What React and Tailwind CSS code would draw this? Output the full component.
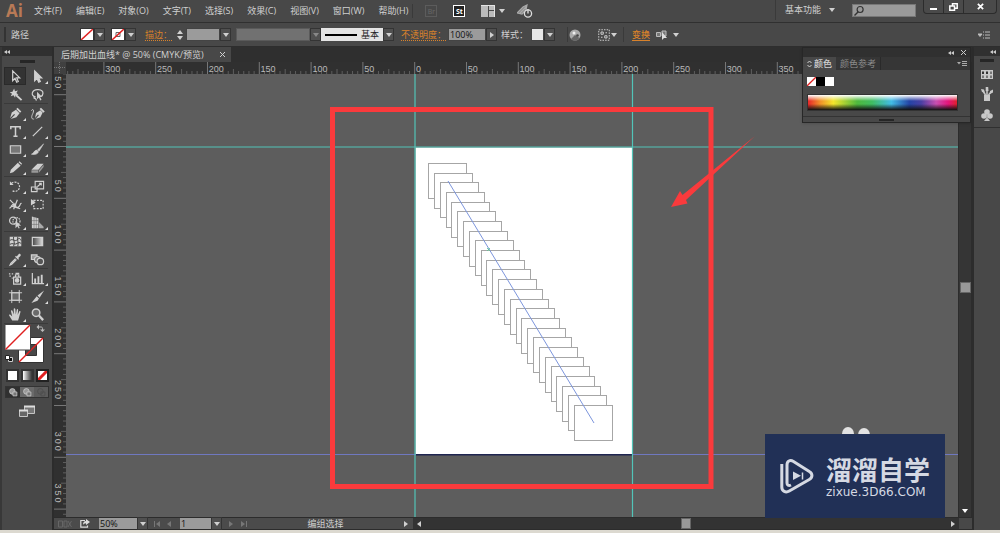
import React from "react";

const menus = [
  "文件(F)",
  "编辑(E)",
  "对象(O)",
  "文字(T)",
  "选择(S)",
  "效果(C)",
  "视图(V)",
  "窗口(W)",
  "帮助(H)",
];

const Icon = ({ children, className = "w-4 h-4" }) => (
  <svg
    viewBox="0 0 16 16"
    className={className}
    fill="none"
    stroke="currentColor"
    strokeWidth="1.3"
    aria-hidden="true"
  >
    {children}
  </svg>
);

const Caret = ({ className = "" }) => (
  <svg viewBox="0 0 6 4" className={`w-[6px] h-1 ${className}`} aria-hidden="true">
    <path d="M0 0h6L3 4z" fill="currentColor" />
  </svg>
);

const DropButton = ({ label, className = "" }) => (
  <button
    aria-label={label}
    className={`w-[11px] h-[13px] flex items-center justify-center border border-[#343434] bg-[#505050] ${className}`}
  >
    <Caret />
  </button>
);

// Tools, grouped the way the toolbar separates them
const toolGroups = [
  [
    { name: "选择工具", active: true, icon: <path d="M5 2v10.500l2.500-2.500 1.800 4 1.700-.8-1.700-3.700H12.500z" /> },
    { name: "直接选择工具", more: true, icon: <path d="M5 2v10.500l2.500-2.500 1.800 4 1.700-.8-1.700-3.700H12.500z" fill="currentColor" /> },
    {
      name: "魔棒工具",
      icon: (
        <>
          <path d="M8.500 8.500l6 5.500" strokeWidth="2" />
          <path d="M6.500 1.500l1 3 3-.8-1.600 2.600 2.300 2-3 .2-.7 3-1.600-2.600-3 1 1.400-2.700-2.500-1.700 3-.4z" fill="currentColor" stroke="none" />
        </>
      ),
    },
    {
      name: "套索工具",
      icon: (
        <>
          <path d="M6 10.500C3 10 2 8 2.500 6.300 3.300 3.700 6 2.500 9 2.800c3 .3 5 2 4.800 4C13.600 8.500 13 9.500 12 10M5 10c-1 1-1 2 0 2.200s2 1 1.500 2.300" />
          <path d="M7.500 5v8l2-1.700 1.500 3 1.300-.6-1.500-3h2.200z" fill="currentColor" stroke="none" />
        </>
      ),
    },
  ],
  [
    {
      name: "钢笔工具",
      more: true,
      icon: (
        <>
          <path d="M2 14l2-7 4.500-3 3.800 3.800L9 12z" fill="currentColor" stroke="none" />
          <path d="M2 14l5-5" stroke="#484848" />
          <path d="M9.500 2.500l4 4" strokeWidth="2" />
        </>
      ),
    },
    {
      name: "曲率工具",
      icon: (
        <>
          <path d="M5 14l1.500-6.500L11 4.500 13.500 7 11 12z" fill="currentColor" stroke="none" />
          <path d="M5 14l4-4.500" stroke="#484848" />
          <path d="M11 2.500l4 4" strokeWidth="2" />
          <path d="M1.500 5c2-3 3 0 1.500 3s-2 6 1 6" strokeWidth="1" />
        </>
      ),
    },
    { name: "文字工具", more: true, icon: <path d="M3 5.500V3h10v2.500M8 3v10M5.800 13h4.400" strokeWidth="1.600" /> },
    { name: "直线段工具", more: true, icon: <path d="M3 13L13 3" /> },
    { name: "矩形工具", more: true, icon: <path d="M2.500 4h11v8h-11z" fill="#777" /> },
    {
      name: "画笔工具",
      more: true,
      icon: <path d="M14.500 2L8 8.200l1.600 1.600zM7.300 8.600L9 10.500c-.4 2-3 3.500-7.500 2.500 2.500-.5 2.500-4 5.800-4.400z" fill="currentColor" strokeWidth="0.600" />,
    },
    {
      name: "铅笔工具",
      more: true,
      icon: <path d="M2 14l1-3.500L10.500 3l3 3L5.500 13zM11.300 2.300l1-1 2.700 2.800-.8 1z" fill="currentColor" stroke="none" />,
    },
    {
      name: "橡皮擦工具",
      more: true,
      icon: (
        <>
          <path d="M1.500 10.500L8 4h6.500L9 10.500z" fill="currentColor" stroke="none" />
          <path d="M1.500 11h7.300v2.500H1.500zM9.500 11l5-6v2.500l-5 6z" fill="#999" stroke="none" />
        </>
      ),
    },
  ],
  [
    {
      name: "旋转工具",
      more: true,
      icon: (
        <>
          <path d="M4 4.500A5 5 0 1 1 4 12" strokeDasharray="2 1.200" />
          <path d="M2 2.500v4h4z" fill="currentColor" stroke="none" />
        </>
      ),
    },
    {
      name: "比例缩放工具",
      more: true,
      icon: <path d="M5.500 2.500h9v8h-9zM1.500 8.500h6v5h-6zM8 8l4-3.500M9.500 4.500H12V7" strokeWidth="1.200" />,
    },
    {
      name: "宽度工具",
      more: true,
      icon: (
        <>
          <path d="M2 3l4 4M1.500 12c3-1 2-5 5-4s1 4 4 3 2-5 4-4M10 3L6 13M3 9.500l10 3" />
          <circle cx="7" cy="8.500" r="1.800" fill="currentColor" stroke="none" />
        </>
      ),
    },
    {
      name: "自由变换工具",
      icon: (
        <>
          <path d="M4 3.500h10v9H4z" strokeDasharray="2 1.400" />
          <path d="M1 2v7l5-3.500z" fill="currentColor" stroke="none" />
        </>
      ),
    },
    {
      name: "形状生成器工具",
      more: true,
      icon: (
        <>
          <circle cx="5.500" cy="6" r="3.800" />
          <circle cx="9" cy="6.500" r="3.800" strokeDasharray="1.500 1" />
          <path d="M8 6v8l2-2 1.500 2.500 1-.6L11.200 11.500H14z" fill="currentColor" stroke="none" />
        </>
      ),
    },
    {
      name: "透视网格工具",
      more: true,
      icon: (
        <>
          <path d="M2 1.500l7 2V14H2z" fill="currentColor" stroke="none" />
          <path d="M9.500 7.500l5 5V14h-5z" fill="#aaa" stroke="none" />
          <path d="M4.300 2v12M6.700 2v12M2 6h7M2 10h7" stroke="#555" strokeWidth="0.500" />
        </>
      ),
    },
  ],
  [
    {
      name: "网格工具",
      icon: (
        <>
          <path d="M2.500 3.500h11v9h-11z" fill="currentColor" />
          <path d="M2 7c3-3 5 2 8-1s3 0 4 1M2 11c3-2 5 1 8-1s3 0 4 0M6 3c-1 3 2 5 0 10M10.500 3c-1 3 1 6 0 10" stroke="#3c3c3c" strokeWidth="1" />
        </>
      ),
    },
    {
      name: "渐变工具",
      icon: (
        <>
          <defs>
            <linearGradient id="toolGradient">
              <stop offset="0" stopColor="#444" />
              <stop offset="1" stopColor="#ddd" />
            </linearGradient>
          </defs>
          <path d="M2.500 3.500h11v9h-11z" fill="url(#toolGradient)" />
        </>
      ),
    },
    {
      name: "吸管工具",
      more: true,
      icon: (
        <>
          <path d="M8 7l-5 5-.800 1.800L4 13l5-5" />
          <path d="M7.500 5l1-1 .8.800 2-2.500c1.300-1.200 3 .4 2 2L11 6.500l.8.900-1 1z" fill="currentColor" stroke="none" />
        </>
      ),
    },
    {
      name: "混合工具",
      icon: (
        <>
          <path d="M1.500 3h6v5h-6z" fill="#999" />
          <circle cx="8" cy="8" r="3.200" fill="#777" />
          <circle cx="11" cy="10" r="3.500" fill="#555" />
        </>
      ),
    },
  ],
  [
    {
      name: "符号喷枪工具",
      more: true,
      icon: (
        <>
          <path d="M6 6.500h7.500v7.500H6zM8 6V4h3.500v2" />
          <circle cx="9.700" cy="10" r="1.800" fill="currentColor" />
          <path d="M8 2.500h4M1 3h1.500M4 3h1.500M1.500 5.500H3M4 7.500h1" />
        </>
      ),
    },
    {
      name: "柱形图工具",
      more: true,
      icon: (
        <>
          <path d="M2.500 2v11.500H15" />
          <path d="M4.500 8h2v5h-2zM8 5.500h2V13H8zM11.500 4h2v9h-2z" fill="currentColor" stroke="none" />
        </>
      ),
    },
    { name: "画板工具", icon: <path d="M4 1v14M12 1v14M1 4h14M1 12h14M4 4h8v8H4z" fill="#6a6a6a" strokeWidth="1" /> },
    {
      name: "切片工具",
      more: true,
      icon: <path d="M15 1.500L8 7l2.200 2.300zM7.200 7.600l2.400 2.500L8 12.500 1.500 15z" fill="currentColor" stroke="none" />,
    },
    {
      name: "抓手工具",
      more: true,
      icon: (
        <path
          d="M4.500 14.500L1.200 9c-.4-1 .7-1.500 1.400-.8L4.500 10 3.200 4.500c-.2-1.200 1.200-1.400 1.600-.4L6.300 8l-.2-5.800c0-1.200 1.500-1.200 1.700 0L8.300 8l1-5.200c.3-1.100 1.600-.8 1.500.3L10.300 8.500l1.600-3.700c.5-1 1.700-.5 1.400.6L11.500 12l-.8 2.500z"
          fill="currentColor"
          stroke="none"
        />
      ),
    },
    {
      name: "缩放工具",
      icon: (
        <>
          <circle cx="6.500" cy="6" r="4" fill="#6a6a6a" strokeWidth="1.600" />
          <path d="M9.500 9l4.500 5" strokeWidth="2.400" />
        </>
      ),
    },
  ],
];

const MenuBar = () => (
  <header className="h-[23px] flex items-center border-b border-[#303030]">
    <span className="w-[34px] pl-[6px] text-[17px] leading-5 font-bold text-[#b87a56]">Ai</span>
    <nav className="flex gap-[14px]">
      {menus.map((m) => (
        <button key={m} className="min-w-7 whitespace-nowrap">
          {m}
        </button>
      ))}
    </nav>
    <div className="ml-1 pl-3 flex items-center gap-4 border-l border-[#3a3a3a]">
      <button className="w-3 h-3 border border-[#5c5c5c] text-[7px] leading-[9px] text-[#686868]">Br</button>
      <button className="w-3 h-3 border border-white bg-[#222] text-[7px] leading-[9px] font-bold text-white">St</button>
      <button aria-label="排列文档" className="flex items-center gap-1">
        <svg viewBox="0 0 14 12" className="w-[14px] h-3" aria-hidden="true">
          <path d="M0 0h7v12H0zM8 0h6v5H8zM8 6h6v6H8z" fill="#bbb" />
          <path d="M0 .5h14M13.500 0v12" stroke="#e4e4e4" />
        </svg>
        <Caret />
      </button>
      <button aria-label="GPU 性能" className="-ml-1">
        <svg viewBox="0 0 16 14" className="w-4 h-[14px]" fill="none" aria-hidden="true">
          <path d="M0 9L6 3l4-2-1 5-4 4zM3 9l7-7" fill="#888" stroke="#aaa" strokeWidth="1.200" />
          <circle cx="11" cy="9.500" r="3.600" fill="#484848" stroke="#ddd" strokeWidth="1.300" />
          <path d="M11 5v4.500" stroke="#ddd" strokeWidth="1.400" />
        </svg>
      </button>
    </div>
    <div className="ml-auto h-full flex items-start">
      <button className="h-5 px-[9px] flex items-center gap-2 border-l border-[#3a3a3a]">
        基本功能
        <Caret className="w-1" />
      </button>
      <label className="mt-1 ml-[8px] w-16 h-[13px] flex items-center bg-[#9a9a9a] border border-[#777] text-[#333]">
        <Icon className="w-3 h-3 shrink-0">
          <circle cx="9.500" cy="6" r="4" strokeWidth="1.600" />
          <path d="M7 9l-5 5" strokeWidth="2" />
        </Icon>
        <input aria-label="搜索" className="w-full min-w-0 bg-transparent outline-none" />
      </label>
      <div className="ml-[7px] mr-[3px] h-[14px] flex bg-[#4a4a4a] border border-t-0 border-[#2c2c2c] rounded-b-sm divide-x divide-[#2c2c2c] text-white">
        <button aria-label="最小化" className="w-5 flex justify-center items-center pt-1">
          <span className="w-[7px] h-[2px] bg-white" />
        </button>
        <button aria-label="还原" className="w-5 flex justify-center items-center">
          <svg viewBox="0 0 9 8" className="w-[9px] h-2" fill="none" stroke="currentColor" strokeWidth="1.500" aria-hidden="true">
            <path d="M3.500 3V.8h4.700v4.400H6M.8 3h4.700v4.200H.8z" />
          </svg>
        </button>
        <button aria-label="关闭" className="w-8 flex justify-center items-center">
          <svg viewBox="0 0 8 8" className="w-[7px] h-[7px]" stroke="currentColor" strokeWidth="2" aria-hidden="true">
            <path d="M1 1l6 6M7 1L1 7" />
          </svg>
        </button>
      </div>
    </div>
  </header>
);

const OptionsBar = () => (
  <section className="h-6 flex items-center border-b border-[#2e2e2e]">
    <span className="ml-1 w-[2px] h-[15px] bg-[#333]" />
    <span className="ml-[5px] w-[69px]">路径</span>

    <button aria-label="填色" className="w-[14px] h-[13px] bg-white border border-[#333]">
      <svg viewBox="0 0 12 11" className="w-full h-full" aria-hidden="true">
        <path d="M0 11L12 0" stroke="#e02020" strokeWidth="1.500" />
      </svg>
    </button>
    <DropButton label="填色选项" />
    <button aria-label="描边颜色" className="ml-[6px] w-[14px] h-[13px] bg-white border border-[#333]">
      <svg viewBox="0 0 12 11" className="w-full h-full" aria-hidden="true">
        <path d="M4 3.500h4v4H4z" fill="none" stroke="#666" />
        <path d="M0 11L12 0" stroke="#e02020" strokeWidth="1.500" />
      </svg>
    </button>
    <DropButton label="描边颜色选项" />

    <label htmlFor="strokeWidth" className="ml-[9px] w-[29px] text-[#d9822b] underline decoration-dotted underline-offset-2">
      描边：
    </label>
    <button aria-label="粗细微调" className="w-3 h-[13px] flex flex-col items-center justify-center gap-[2px]">
      <Caret className="rotate-180" />
      <Caret />
    </button>
    <input id="strokeWidth" className="w-[34px] h-[13px] bg-[#9b9b9b] border border-[#444] outline-none" />
    <DropButton label="粗细列表" />
    <span className="ml-[5px] w-[74px] h-[13px] bg-[#717171] border border-[#5a5a5a]" />
    <DropButton label="变量宽度配置文件" className="border-[#444] bg-[#484848] text-[#888]" />

    <button aria-label="画笔定义" className="w-[62px] h-[13px] px-1 flex items-center gap-1 bg-[#e4e4e4] text-[#222]">
      <span className="flex-1 h-[2px] bg-black" />
      基本
    </button>
    <DropButton label="画笔列表" />

    <label htmlFor="opacity" className="ml-[7px] w-[47px] whitespace-nowrap text-[#d9822b] underline decoration-dotted underline-offset-2">
      不透明度：
    </label>
    <input
      id="opacity"
      defaultValue="100%"
      className="w-[38px] h-[13px] px-px bg-[#9b9b9b] border border-[#444] text-[#111] outline-none"
    />
    <button aria-label="不透明度滑块" className="w-[11px] h-[13px] flex items-center justify-center border border-[#343434] bg-[#505050]">
      <Caret className="-rotate-90" />
    </button>
    <span className="ml-1 w-[30px]">样式：</span>
    <button aria-label="图形样式" className="w-[13px] h-[13px] bg-[#e6e6e6] border border-[#444]" />
    <DropButton label="图形样式列表" />

    <button aria-label="重新着色图稿" className="ml-3 h-[15px] pl-px pr-[5px] border-l border-[#3a3a3a]">
      <svg viewBox="0 0 12 12" className="w-3 h-3" aria-hidden="true">
        <circle cx="6" cy="6" r="5.500" fill="#aaa" />
        <path d="M6 6L2 10a5.500 5.500 0 0 0 8.500-1z" fill="#666" />
        <circle cx="5" cy="4" r="1.500" fill="#eee" />
        <circle cx="8.500" cy="6.500" r="1.300" fill="#444" />
      </svg>
    </button>
    <button aria-label="对齐" className="ml-3 pr-[6px] h-[15px] flex items-center gap-px border-r border-[#3a3a3a]">
      <Icon className="w-3 h-3">
        <path d="M1 1h14v14H1z" strokeDasharray="2 1.500" />
        <path d="M4 4h3v3H4zM9 9h3v3H9zM10 5h2M4 11h2" />
      </Icon>
      <Caret />
    </button>
    <a href="#transform" className="ml-2 text-[#d9822b] font-medium underline underline-offset-2">
      变换
    </a>
    <button aria-label="选择类似的对象" className="ml-[6px] flex items-center gap-[5px]">
      <svg viewBox="0 0 12 12" className="w-3 h-3" aria-hidden="true">
        <path d="M.5 3.500h4v4h-4zM6 2h4v5H6z" fill="#777" stroke="#bbb" />
        <path d="M6 3v8l2-2h3z" fill="#ddd" />
      </svg>
      <Caret />
    </button>
    <button aria-label="控制面板菜单" className="ml-auto mr-[10px]">
      <svg viewBox="0 0 12 8" className="w-3 h-2" aria-hidden="true">
        <path d="M0 3h4L2 5.500zM5 1h1M5 4h1M5 7h1M7 1h5M7 4h5M7 7h5" fill="#bbb" stroke="#bbb" />
      </svg>
    </button>
  </section>
);

const Collapse = ({ className = "" }) => (
  <svg viewBox="0 0 6 4" className={`w-[6px] h-1 ${className}`} aria-hidden="true">
    <path d="M3 0v4L0 2zM6 0v4L3 2z" fill="#ccc" />
  </svg>
);

const Toolbar = () => (
  <aside className="w-[54px] shrink-0 border-x-2 border-l-[#383838] border-r-[#2c2c2c] flex flex-col">
    <div className="h-[9px] pl-[2px] flex items-center bg-[#303030]">
      <Collapse />
    </div>
    <div className="h-[11px] flex justify-center items-center">
      <span className="w-[15px] h-[3px] bg-[#262626]" />
    </div>
    <div className="pl-[2px] pr-1 divide-y divide-[#3a3a3a]">
      {toolGroups.map((group, i) => (
        <div key={i} className="grid grid-cols-2">
          {group.map((tool) => (
            <button
              key={tool.name}
              aria-label={tool.name}
              className={`relative h-[18px] flex items-center justify-center ${
                tool.active ? "bg-[#333] border border-[#2a2a2a]" : ""
              }`}
            >
              <Icon className="w-[15px] h-[15px] shrink-0">{tool.icon}</Icon>
              {tool.more && (
                <svg viewBox="0 0 3 3" className="absolute right-0 bottom-px w-[3px] h-[3px]" aria-hidden="true">
                  <path d="M3 0v3H0z" fill="#ddd" />
                </svg>
              )}
            </button>
          ))}
        </div>
      ))}
      <button aria-label="填色和描边" className="block w-full">
        <svg viewBox="4 325 44 39" className="w-11 h-[39px]" aria-hidden="true">
          <path d="M18.500 338.500h25v25h-25z" fill="#fff" stroke="#333" />
          <path d="M25.500 345.500h11v11h-11z" fill="#484848" stroke="#333" />
          <path d="M19 363L43 339" stroke="#e02020" strokeWidth="1.500" />
          <path d="M5 325.500h25.500V351H5z" fill="#fff" stroke="#444" />
          <path d="M5.500 350.500L30 326" stroke="#e02020" strokeWidth="1.500" />
          <path d="M38 328h3c1 0 1.500.5 1.500 1.500V331" fill="none" stroke="#bbb" />
          <path d="M39 325.500v5l-2.500-2.500zM40 330.500h5l-2.500 2.500z" fill="#bbb" />
          <path d="M8.500 358.500h4v4h-4z" fill="#111" stroke="#ccc" />
          <path d="M5.500 356.500h4v4h-4z" fill="#fff" stroke="#222" />
        </svg>
      </button>
    </div>
    <div className="mt-[6px] ml-1 flex gap-[2px]">
      <button aria-label="颜色" className="w-[13px] h-[13px] border-2 border-[#333] bg-white" />
      <button aria-label="渐变" className="w-[13px] h-[13px] border-2 border-[#333] bg-linear-to-r from-white to-[#333]" />
      <button aria-label="无" className="w-[13px] h-[13px] border-2 border-[#222] bg-white">
        <svg viewBox="0 0 9 9" className="w-full h-full" aria-hidden="true">
          <path d="M0 9L9 0" stroke="#e02020" strokeWidth="3" />
        </svg>
      </button>
    </div>
    <div className="mt-1 mx-[3px] h-3 flex border border-[#333] bg-[#6a6a6a]">
      {["正常绘图", "背面绘图", "内部绘图"].map((mode, i) => (
        <button
          key={mode}
          aria-label={mode}
          className={`flex-1 flex items-center justify-center ${
            i === 0 ? "bg-[#303030]" : i === 2 ? "bg-[#5c5c5c] text-[#4c4c4c]" : ""
          }`}
        >
          <Icon className="w-[9px] h-[9px]">
            <circle cx="6" cy="6" r="5" fill={i === 2 ? "none" : "#999"} />
            <path d="M7 7h7v7H7z" fill={i === 2 ? "none" : "#777"} />
          </Icon>
        </button>
      ))}
    </div>
    <button aria-label="更改屏幕模式" className="mt-[7px] flex justify-center">
      <svg viewBox="0 0 16 13" className="w-4 h-[13px]" aria-hidden="true">
        <path d="M5.500 1.500h10v7h-10z" fill="#777" stroke="#c4c4c4" />
        <path d="M.5 5.500h8v6h-8z" fill="#666" stroke="#c4c4c4" />
        <path d="M5 1.500h11M0 5.500h9" stroke="#ddd" strokeWidth="2" />
      </svg>
    </button>
  </aside>
);

// One 50 mm step on the rulers is 51.8px, ten small ticks each
const STEP = 51.8;
const steps = (from, to) => Array.from({ length: to - from + 1 }, (_, i) => from + i);

const TopRuler = () => (
  <svg
    className="flex-1 min-w-0 h-3 font-['Liberation_Sans',sans-serif] text-[9px]"
    fill="#b8b8b8"
    aria-label="水平标尺"
  >
    {steps(-70, 120).map((n) => {
      const x = 348.7 + (n * STEP) / 10;
      const major = n % 10 === 0;
      return (
        <line key={n} x1={x} x2={x} y1={major ? 0 : n % 5 === 0 ? 7 : 9} y2="12" stroke={major ? "#777" : "#5e5e5e"} />
      );
    })}
    {steps(-6, 7).map((n) => (
      <text key={n} x={350 + n * STEP} y="10">
        {Math.abs(n) * 50}
      </text>
    ))}
  </svg>
);

const SideRuler = () => (
  <svg
    className="w-3 shrink-0 h-full font-['Liberation_Sans',sans-serif] text-[9px]"
    fill="#b8b8b8"
    aria-label="垂直标尺"
  >
    {steps(-14, 110).map((n) => {
      const y = 72.5 + (n * STEP) / 10;
      const major = n % 10 === 0;
      return (
        <line key={n} y1={y} y2={y} x1={major ? 0 : n % 5 === 0 ? 7 : 9} x2="12" stroke={major ? "#777" : "#5e5e5e"} />
      );
    })}
    {steps(-1, 7).map((n) => {
      const digits = String(Math.abs(n) * 50).split("");
      return digits.map((d, i) => {
        const y = 61 + n * STEP - (digits.length - 1 - i) * 7;
        return (
          <text key={`${n}-${i}`} x="1" y={y} transform={`rotate(90 1 ${y})`}>
            {d}
          </text>
        );
      });
    })}
  </svg>
);

const Canvas = () => (
  <main className="relative flex-1 min-w-0 bg-[#5d5d5d] overflow-hidden">
    <svg className="absolute inset-0 w-full h-full" fill="none" aria-label="画板">
      <path d="M349.500 73.500h217v307h-217z" fill="#fff" />
      {steps(0, 25).map((n) => (
        <rect
          key={n}
          x={362.5 + Math.round(n * 5.84)}
          y={89.5 + Math.round(n * 9.68)}
          width="38"
          height="35"
          fill="#fff"
          stroke="#a6a6a6"
        />
      ))}
      <path d="M382 107L528 349" stroke="#7c95dc" />
      <path d="M421 174l3 3M421 177l3-3" stroke="#55c890" strokeWidth="0.800" />

      {/* guides */}
      <line x1="0" x2="100%" y1="380.500" y2="380.500" stroke="#6f78c0" />
      <path d="M350 380.800h216" stroke="#1f2550" strokeWidth="1.500" />
      <line x1="0" x2="100%" y1="73" y2="73" stroke="#52c4b8" />
      <line x1="349" x2="349" y1="0" y2="100%" stroke="#52c4b8" strokeWidth="1.200" />
      <line x1="566.500" x2="566.500" y1="0" y2="100%" stroke="#52c4b8" strokeWidth="1.200" />

      {/* red annotation */}
      <rect x="266.500" y="35.500" width="378.500" height="377" stroke="#fa3a3c" strokeWidth="5" />
      <path d="M605 133l9-16 2.500 4L689 62l-69 64 1.500 3.500z" fill="#fa3a3c" />

      <ellipse cx="782" cy="360" rx="6" ry="7" fill="#e2e2e2" />
      <ellipse cx="798" cy="361" rx="6" ry="7" fill="#e2e2e2" />
    </svg>
  </main>
);

const StatusBar = () => (
  <footer className="h-[13px] flex items-center bg-[#333] border-y border-[#2c2c2c]">
    <div className="w-[359px] h-full flex items-center bg-[#4b4b4b]">
      <svg viewBox="0 0 14 8" className="ml-1 w-[14px] h-2" fill="none" stroke="#666" aria-hidden="true">
        <path d="M.5 1h4v6h-4zM6 1h3v6H6zM10 1l3.500 6M10 7l3.500-6" />
      </svg>
      <button aria-label="共享" className="ml-2">
        <svg viewBox="0 0 10 9" className="w-[10px] h-[9px]" fill="none" aria-hidden="true">
          <path d="M5 1.500H.8v6.700h6.700V6.500" stroke="#ddd" strokeWidth="1.200" />
          <path d="M6 0l4 3-4 3V4.200C4.500 4.200 3.500 5 3 6c0-2.500 1-4 3-4z" fill="#ddd" />
        </svg>
      </button>
      <input
        aria-label="缩放比例"
        defaultValue="50%"
        className="ml-[9px] w-[38px] h-[11px] px-px bg-[#9b9b9b] text-[#111] outline-none"
      />
      <DropButton label="缩放列表" className="h-[11px]" />
      <button aria-label="首个画板" className="ml-[6px] text-[#777]">
        <svg viewBox="0 0 7 6" className="w-[7px] h-[6px]" fill="currentColor" aria-hidden="true">
          <path d="M0 0h1v6H0zM6 0v6L2 3z" />
        </svg>
      </button>
      <button aria-label="上一画板" className="ml-[5px] text-[#777]">
        <Caret className="rotate-90" />
      </button>
      <input
        aria-label="画板编号"
        defaultValue="1"
        className="ml-[8px] w-[31px] h-[11px] px-px bg-[#9b9b9b] text-[#111] outline-none"
      />
      <DropButton label="画板列表" className="h-[11px]" />
      <button aria-label="下一画板" className="ml-[6px] text-[#777]">
        <Caret className="-rotate-90" />
      </button>
      <button aria-label="最后一个画板" className="ml-[6px] text-[#777]">
        <svg viewBox="0 0 7 6" className="w-[7px] h-[6px]" fill="currentColor" aria-hidden="true">
          <path d="M6 0h1v6H6zM1 0v6l4-3z" />
        </svg>
      </button>
      <span className="flex-1 pl-9 text-center leading-[11px]">编组选择</span>
      <button aria-label="状态栏菜单" className="ml-[35px] mr-1">
        <Caret className="-rotate-90" />
      </button>
    </div>
    <div className="flex-1 h-full pl-[3px] pr-[3px] flex items-center">
      <Caret className="rotate-90" />
      <div className="flex-1 flex justify-center">
        <span className="w-[10px] h-[11px] bg-[#999] border border-[#666]" />
      </div>
      <Caret className="-rotate-90" />
    </div>
    <span className="w-[13px] h-full bg-[#484848]" />
  </footer>
);

const Document = () => (
  <section className="flex-1 min-w-0 flex flex-col">
    <div className="h-[15px] flex bg-[#2f2f2f]">
      <button className="w-[177px] pl-[7px] pr-[6px] flex items-center justify-between bg-[#484848] whitespace-nowrap">
        后期加出血线* @ 50% (CMYK/预览)
        <svg viewBox="0 0 5 5" className="w-[5px] h-[5px]" stroke="currentColor" aria-hidden="true">
          <path d="M0 0l5 5M5 0L0 5" />
        </svg>
      </button>
    </div>
    <div className="flex-1 min-h-0 flex">
      <div className="flex-1 min-w-0 flex flex-col">
        <div className="h-3 flex bg-[#303030]">
          <svg className="w-3 h-3 bg-[#404040]" aria-hidden="true">
            <path d="M0 5.500h12M5.500 0v12" stroke="#777" strokeDasharray="1 1" />
          </svg>
          <TopRuler />
        </div>
        <div className="flex-1 min-h-0 flex bg-[#303030]">
          <SideRuler />
          <Canvas />
        </div>
      </div>
      <div className="w-[14px] px-px flex flex-col items-center justify-center bg-[#353535] border-x border-[#2c2c2c]">
        <span className="flex-1" />
        <span className="w-[11px] h-[11px] bg-[#999] border border-[#666]" />
        <span className="flex-1 flex items-end pb-1">
          <Caret className="text-white" />
        </span>
      </div>
    </div>
    <StatusBar />
  </section>
);

const ColorPanel = () => (
  <section className="absolute top-0 right-[29px] w-[169px] bg-[#484848] border border-[#272727] shadow">
    <div className="h-[9px] px-1 flex items-center justify-end gap-[7px] bg-[#303030]">
      <Collapse />
      <svg viewBox="0 0 5 5" className="w-[5px] h-[5px]" stroke="#ccc" aria-hidden="true">
        <path d="M0 0l5 5M5 0L0 5" />
      </svg>
    </div>
    <div className="h-[13px] flex bg-[#363636]">
      <button className="px-1 flex items-center gap-[2px] bg-[#484848] font-medium">
        <svg viewBox="0 0 5 8" className="w-[5px] h-2" fill="none" stroke="currentColor" aria-hidden="true">
          <path d="M.5 3l2-2 2 2M.5 5l2 2 2-2" />
        </svg>
        颜色
      </button>
      <button className="px-1 border-r border-[#2a2a2a] text-[#8c8c8c]">颜色参考</button>
      <button aria-label="面板菜单" className="ml-auto mr-[3px]">
        <svg viewBox="0 0 10 7" className="w-[10px] h-[7px]" aria-hidden="true">
          <path d="M0 2h4L2 4.500z" fill="#aaa" />
          <path d="M5 1.500h5M5 3.500h5M5 5.500h5" stroke="#aaa" />
        </svg>
      </button>
    </div>
    <div className="px-1 pt-[7px] flex">
      <button aria-label="无" className="w-[9px] h-[9px] bg-white">
        <svg viewBox="0 0 9 9" className="w-full h-full" aria-hidden="true">
          <path d="M0 9L9 0" stroke="#e02020" strokeWidth="1.300" />
        </svg>
      </button>
      <button aria-label="黑色" className="w-[9px] h-[9px] bg-black" />
      <button aria-label="白色" className="w-[9px] h-[9px] bg-white" />
    </div>
    <div className="ml-1 mr-3 mt-2 h-[17px] border border-[#333] bg-[linear-gradient(90deg,#e8262a_0%,#f2902a_8%,#f3e62c_17%,#4fb93e_33%,#3fbd62_43%,#42bce6_56%,#2444a6_68%,#4a3fa3_76%,#c94fb0_86%,#e4157c_94%,#e0202c_100%)]">
      <div className="w-full h-full bg-[linear-gradient(180deg,#fff_0%,transparent_40%,transparent_60%,#111_100%)]" />
    </div>
    <div className="mt-[5px] h-[6px] flex items-center justify-center border-t border-[#333]">
      <span className="w-[15px] h-[2px] bg-[#262626]" />
    </div>
  </section>
);

const Dock = () => (
  <aside className="w-7 shrink-0 border-l-2 border-[#2c2c2c]">
    <div className="h-[9px] pr-1 flex items-center justify-end bg-[#303030]">
      <Collapse />
    </div>
    <div className="pt-[3px] pb-[6px] flex flex-col items-center gap-2 border-b border-[#303030]">
      <span className="w-[14px] h-[3px] bg-[#262626]" />
      <button aria-label="色板">
        <svg viewBox="0 0 12 9" className="w-3 h-[9px]" aria-hidden="true">
          <path d="M0 0h12v9H0z" fill="#c8c8c8" />
          <path d="M1 1.500h2v2.500H1zM5 1.500h2v2.500H5z" fill="#333" />
          <path d="M9 1.500h2v2.500H9zM1 5.500h2V8H1zM5 5.500h2V8H5zM9 5.500h2V8H9z" fill="#777" />
        </svg>
      </button>
      <button aria-label="画笔">
        <svg viewBox="0 0 12 14" className="w-3 h-[14px]" aria-hidden="true">
          <path d="M3 8h6v6H3z" fill="#c8c8c8" />
          <path d="M4.500 8L2 4M6 8V3M7.500 8L10 5" stroke="#c8c8c8" strokeWidth="1.500" />
          <path d="M0 2l3 .5.800 3L1 5zM4.700 0h2.500l.3 4H4.700zM12 2.500v3l-3 1.500V4z" fill="#c8c8c8" />
        </svg>
      </button>
      <button aria-label="符号">
        <svg viewBox="0 0 12 12" className="w-3 h-3" fill="#c8c8c8" aria-hidden="true">
          <circle cx="6" cy="3" r="2.800" />
          <circle cx="3" cy="7" r="2.800" />
          <circle cx="9" cy="7" r="2.800" />
          <path d="M5.500 5h1v4l2.500 3H3l2.500-3z" />
        </svg>
      </button>
    </div>
  </aside>
);

const Watermark = () => (
  <div className="absolute right-[55px] bottom-3 w-[180px] h-[84px] pl-[15px] flex items-center gap-3 bg-[#213056] text-[#d5d9e3]">
    <svg viewBox="0 0 34 36" className="w-[34px] h-9 shrink-0" fill="none" stroke="currentColor" aria-hidden="true">
      <path d="M1.800 6v23c0 4.500 4 6 7.500 4l20-11.500c3.500-2 3.500-6 0-8L13.500 3.500C10 1.500 7 3 7 7v18c0 2 1.500 3.200 4 2" strokeWidth="3" />
      <path d="M13 13.500v8.500l8-4.200z" fill="currentColor" stroke="none" />
      <path d="M22.500 14.500v7" strokeWidth="1.500" />
    </svg>
    <div className="flex flex-col">
      <span className="text-[26px] leading-8 font-bold whitespace-nowrap">溜溜自学</span>
      <span className="font-['DejaVu_Sans',sans-serif] text-xs leading-3">zixue.3D66.COM</span>
    </div>
  </div>
);

const App = () => {
  return (
    <div className="h-screen w-full flex flex-col bg-[#484848] text-[#d0d0d0] text-[9px] leading-3 font-['Open_Sans','Noto_Sans_CJK_SC',sans-serif]">
      <MenuBar />
      <OptionsBar />
      <div className="relative flex-1 min-h-0 flex">
        <Toolbar />
        <Document />
        <Dock />
        <ColorPanel />
        <Watermark />
      </div>
      <div className="h-[3px] bg-[#dcd9d0]" />
    </div>
  );
};

export default App;
